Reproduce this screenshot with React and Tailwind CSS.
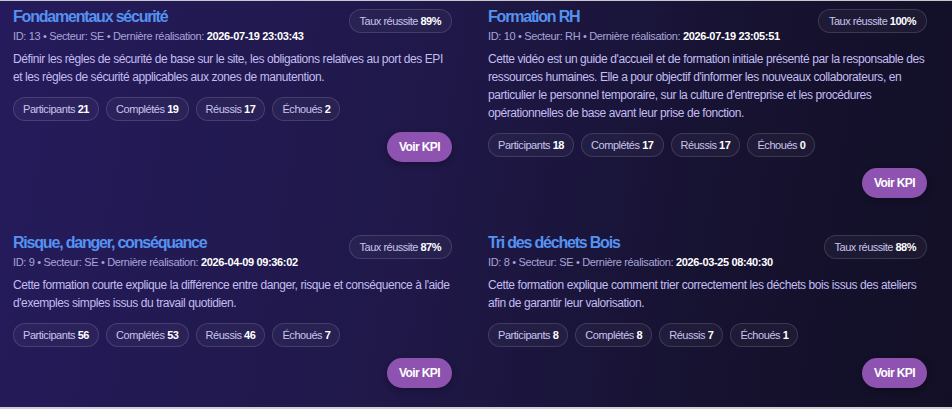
import React from "react";

const cards = [
  {
    title: "Fondamentaux sécurité",
    id: 13,
    sector: "SE",
    date: "2026-07-19 23:03:43",
    rate: "89%",
    desc: "Définir les règles de sécurité de base sur le site, les obligations relatives au port des EPI et les règles de sécurité applicables aux zones de manutention.",
    p: 21, c: 19, r: 17, e: 2,
  },
  {
    title: "Formation RH",
    id: 10,
    sector: "RH",
    date: "2026-07-19 23:05:51",
    rate: "100%",
    desc: "Cette vidéo est un guide d'accueil et de formation initiale présenté par la responsable des ressources humaines. Elle a pour objectif d'informer les nouveaux collaborateurs, en particulier le personnel temporaire, sur la culture d'entreprise et les procédures opérationnelles de base avant leur prise de fonction.",
    p: 18, c: 17, r: 17, e: 0,
  },
  {
    title: "Risque, danger, conséquance",
    id: 9,
    sector: "SE",
    date: "2026-04-09 09:36:02",
    rate: "87%",
    desc: "Cette formation courte explique la différence entre danger, risque et conséquence à l'aide d'exemples simples issus du travail quotidien.",
    p: 56, c: 53, r: 46, e: 7,
  },
  {
    title: "Tri des déchets Bois",
    id: 8,
    sector: "SE",
    date: "2026-03-25 08:40:30",
    rate: "88%",
    desc: "Cette formation explique comment trier correctement les déchets bois issus des ateliers afin de garantir leur valorisation.",
    p: 8, c: 8, r: 7, e: 1,
  },
];

function Pill({ label, value }) {
  return (
    <span className="inline-flex h-[24px] items-center rounded-full border border-[#ffffff22] bg-[#ffffff0a] px-[9px] text-[11px] tracking-[-0.45px] text-[#c9c4ec]">
      {label}&nbsp;<b className="font-bold text-white">{value}</b>
    </span>
  );
}

function Card({ d }) {
  return (
    <div className="flex flex-col px-[13px] pt-[6px] pb-[19px]">
      <div className="flex items-start justify-between gap-3">
        <div className="min-w-0">
          <div className="text-[16px] font-bold leading-[20px] tracking-[-1.2px] text-[#5592f0]">{d.title}</div>
          <div className="mt-[1px] whitespace-nowrap text-[11px] leading-[16px] tracking-[-0.35px] text-[#a9a4d8]">
            ID: {d.id} • Secteur: {d.sector} • Dernière réalisation:{" "}
            <b className="font-bold text-white">{d.date}</b>
          </div>
        </div>
        <span className="mt-[2px] inline-flex h-[24px] shrink-0 items-center rounded-full border border-[#ffffff22] bg-[#ffffff0a] px-[10px] text-[11px] tracking-[-0.5px] text-[#c9c4ec]">
          Taux réussite&nbsp;<b className="font-bold text-white">{d.rate}</b>
        </span>
      </div>
      <p className="mt-[6px] text-[12px] leading-[18px] tracking-[-0.42px] text-[#c3bdf0]">{d.desc}</p>
      <div className="mt-[11px] flex flex-wrap gap-[7px]">
        <Pill label="Participants" value={d.p} />
        <Pill label="Complétés" value={d.c} />
        <Pill label="Réussis" value={d.r} />
        <Pill label="Échoués" value={d.e} />
      </div>
      <div className="mt-[11px] flex justify-end">
        <button className="h-[30px] w-[65px] rounded-full bg-[#8e53b0] text-[12px] font-bold tracking-[-0.6px] text-white shadow-[0_2px_6px_rgba(0,0,0,0.3)]">
          Voir KPI
        </button>
      </div>
    </div>
  );
}

export default function App() {
  return (
    <div
      className="h-[409px] w-[952px] overflow-hidden border-t border-b-2 border-t-[#c8c8cc] border-b-[#cfcfd4] bg-[linear-gradient(100deg,#251b5c_0%,#1f1848_45%,#161230_75%,#120f26_100%)]"
      style={{ fontFamily: '"Liberation Sans", Arial, sans-serif' }}
    >
      <div className="grid grid-cols-2 gap-x-[10px] gap-y-[10px] pr-[12px]">
        {cards.map((d) => (
          <Card key={d.id} d={d} />
        ))}
      </div>
    </div>
  );
}
